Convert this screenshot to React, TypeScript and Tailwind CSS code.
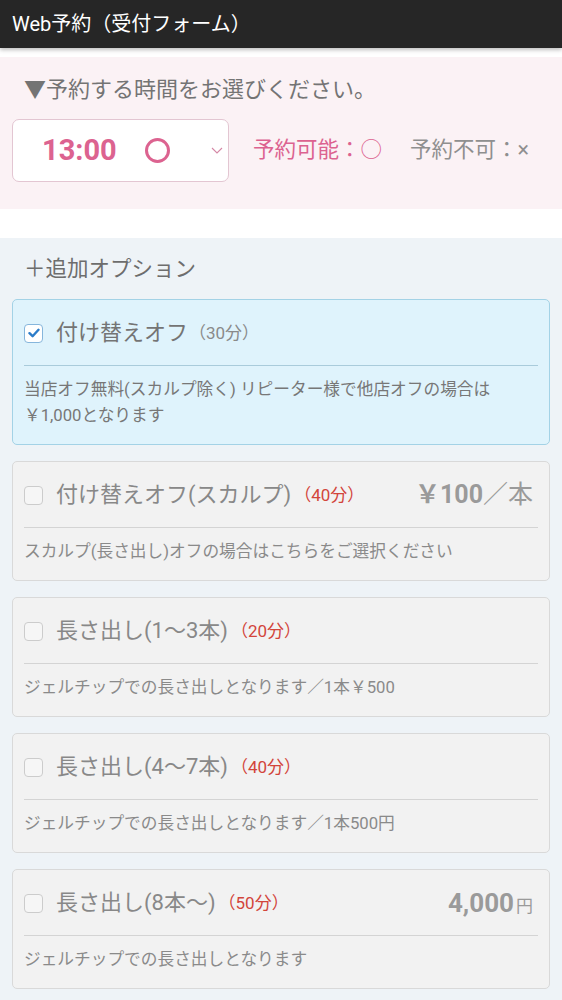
import React from "react";

const FONT = { fontFamily: 'Roboto, "Noto Sans CJK JP", "Noto Sans", sans-serif' };

function Check({ checked }: { checked?: boolean }) {
  if (checked) {
    return (
      <span className="flex h-[19px] w-[19px] shrink-0 items-center justify-center rounded-[4px] border border-[#86b6dc] bg-white">
        <svg width="12" height="10" viewBox="0 0 12 10">
          <path d="M1.5 5.2 L4.6 8.2 L10.5 1.8" fill="none" stroke="#2b7cc9" strokeWidth="2.4" strokeLinecap="round" strokeLinejoin="round" />
        </svg>
      </span>
    );
  }
  return <span className="block h-[19px] w-[19px] shrink-0 rounded-[4px] border border-[#cccccc] bg-[#f6f6f6]" />;
}

type Opt = {
  title: string;
  min: string;
  desc: React.ReactNode;
  price?: React.ReactNode;
  checked?: boolean;
};

function Card({ o }: { o: Opt }) {
  const base = o.checked
    ? "border-[#a3d2e6] bg-[#dff3fc]"
    : "border-[#d9d9d9] bg-[#f2f2f2]";
  const line = o.checked ? "bg-[#a9cbdb]" : "bg-[#d4d4d4]";
  return (
    <div className={`rounded-[5px] border px-[11px] pt-[15px] pb-[15px] ${base}`}>
      <div className="flex h-[36px] items-center">
        <Check checked={o.checked} />
        <span className={`ml-[13px] text-[22px] leading-none ${o.checked ? "text-[#747474]" : "text-[#888888]"}`}>
          {o.title}
        </span>
        {o.checked ? (
          <span className="ml-[1px] text-[17px] leading-none text-[#8a8a8a]">（30分）</span>
        ) : (
          <span className="ml-[3px] text-[17px] leading-none text-[#d2453b]">{o.min}</span>
        )}
        {o.price && <span className="ml-auto pr-[5px]">{o.price}</span>}
      </div>
      <div className={`mt-[14px] h-px ${line}`} />
      <div className={`mt-[11px] text-[16.7px] leading-[26px] ${o.checked ? "text-[#777777]" : "text-[#8a8a8a]"}`}>
        {o.desc}
      </div>
    </div>
  );
}

export default function App() {
  const opts: Opt[] = [
    {
      title: "付け替えオフ",
      min: "（30分）",
      checked: true,
      desc: (
        <>
          当店オフ無料(スカルプ除く) リピーター様で他店オフの場合は
          <br />
          ￥1,000となります
        </>
      ),
    },
    {
      title: "付け替えオフ(スカルプ)",
      min: "（40分）",
      desc: "スカルプ(長さ出し)オフの場合はこちらをご選択ください",
      price: (
        <span className="text-[#9a9a9a]">
          <span className="text-[25px] font-bold">￥100</span>
          <span className="text-[25px]">／本</span>
        </span>
      ),
    },
    {
      title: "長さ出し(1〜3本)",
      min: "（20分）",
      desc: "ジェルチップでの長さ出しとなります／1本￥500",
    },
    {
      title: "長さ出し(4〜7本)",
      min: "（40分）",
      desc: "ジェルチップでの長さ出しとなります／1本500円",
    },
    {
      title: "長さ出し(8本〜)",
      min: "（50分）",
      desc: "ジェルチップでの長さ出しとなります",
      price: (
        <span className="text-[#9a9a9a]">
          <span className="text-[26px] font-bold">4,000</span>
          <span className="ml-[2px] text-[17px]">円</span>
        </span>
      ),
    },
  ];

  return (
    <div style={FONT} className="min-h-[1000px] w-[562px] bg-[#eef3f7]">
      <header className="relative z-10 flex h-[48px] items-center bg-[#262626] px-[12px] shadow-[0_2px_4px_rgba(0,0,0,0.25)]">
        <span className="text-[20px] text-white">Web予約（受付フォーム）</span>
      </header>
      <div className="h-[9px] bg-white" />
      <section className="bg-[#fbf2f5] px-[12px] pt-[18px] pb-[27px]">
        <h2 className="pl-[12px] text-[22px] leading-[30px] text-[#747474]">▼予約する時間をお選びください。</h2>
        <div className="mt-[14px] flex items-center">
          <div className="flex h-[63px] w-[217px] items-center rounded-[7px] border border-[#e3c6d2] bg-white pl-[29px] pr-[5px]">
            <span className="text-[29px] font-bold text-[#dc6390]">13:00</span>
            <span className="ml-[28px] block h-[25px] w-[25px] rounded-full border-[3px] border-[#dc6390]" />
            <svg className="ml-auto" width="12" height="7" viewBox="0 0 12 7">
              <path d="M1 1 L6 6 L11 1" fill="none" stroke="#d588a6" strokeWidth="1.1" />
            </svg>
          </div>
          <span className="ml-[24px] text-[21.5px] text-[#dc6390]">予約可能：○</span>
          <span className="ml-[28px] text-[21.5px] text-[#8f8f8f]">予約不可：×</span>
        </div>
      </section>
      <div className="h-[29px] bg-white" />
      <section className="px-[12px] pt-[16px] pb-[11px]">
        <h2 className="pl-[12px] text-[21.5px] leading-[30px] text-[#6d6d6d]">＋追加オプション</h2>
        <div className="mt-[15px] flex flex-col gap-[16px]">
          {opts.map((o, i) => (
            <Card key={i} o={o} />
          ))}
        </div>
      </section>
    </div>
  );
}
